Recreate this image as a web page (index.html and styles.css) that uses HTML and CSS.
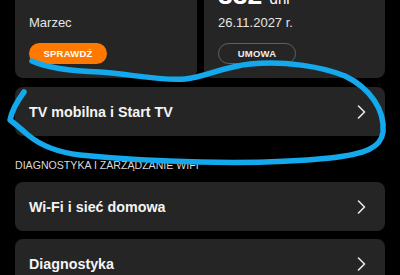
FILE: index.html
```html
<!DOCTYPE html>
<html lang="pl">
<head>
<meta charset="utf-8">
<link rel="stylesheet" href="styles.css">
</head>
<body>
<div class="page">
  <div class="summary">
    <div class="card tile">
      <div class="tile-text">Marzec</div>
      <button class="btn btn-orange">SPRAWDŹ</button>
    </div>
    <div class="card tile">
      <div class="big">332 <span class="unit">dni</span></div>
      <div class="tile-text">26.11.2027 r.</div>
      <button class="btn btn-outline">UMOWA</button>
    </div>
  </div>

  <a class="card row">
    <span class="row-title">TV mobilna i Start TV</span>
    <svg class="chev" width="9" height="14" viewBox="0 0 9 14"><path d="M1.5 1 L7.5 7 L1.5 13" fill="none" stroke="#e8e8e8" stroke-width="1.6" stroke-linecap="round" stroke-linejoin="round"/></svg>
  </a>

  <div class="section-label">DIAGNOSTYKA I ZARZĄDZANIE WIFI</div>

  <div class="list">
    <a class="card row">
      <span class="row-title">Wi-Fi i sieć domowa</span>
      <svg class="chev" width="9" height="14" viewBox="0 0 9 14"><path d="M1.5 1 L7.5 7 L1.5 13" fill="none" stroke="#e8e8e8" stroke-width="1.6" stroke-linecap="round" stroke-linejoin="round"/></svg>
    </a>
    <a class="card row">
      <span class="row-title">Diagnostyka</span>
      <svg class="chev" width="9" height="14" viewBox="0 0 9 14"><path d="M1.5 1 L7.5 7 L1.5 13" fill="none" stroke="#e8e8e8" stroke-width="1.6" stroke-linecap="round" stroke-linejoin="round"/></svg>
    </a>
  </div>
</div>

<svg class="scribble" width="400" height="275" viewBox="0 0 400 275">
  <path d="M32 61 C45 67 70 71 100 72 C130 74 160 81 185 79 C205 77 222 67 250 64 C285 61 320 66 345 76 C370 88 385 110 383 132 C381 148 365 154 330 158 C290 162 240 163 200 162 C150 161 110 158 80 155 C55 152 40 145 28 135 C20 128 14 123 10 120 C12 110 18 100 24 92" fill="none" stroke="#14a8ec" stroke-width="5.5" stroke-linecap="round" stroke-linejoin="round"/>
</svg>
</body>
</html>
```

FILE: styles.css
```css
html, body {
  margin: 0;
  padding: 0;
  background: #000;
  width: 400px;
  height: 275px;
  overflow: hidden;
}

body {
  position: relative;
  font-family: "Liberation Sans", Arial, sans-serif;
  color: #f2f2f2;
}

.page {
  padding: 0 15px;
  display: flex;
  flex-direction: column;
}

.card {
  background: #252525;
  border-radius: 8px;
}

.summary {
  display: grid;
  grid-template-columns: 182px 181px;
  gap: 7px;
  margin-top: -40px;
}

.tile {
  display: flex;
  flex-direction: column;
  justify-content: flex-end;
  align-items: flex-start;
  padding: 0 14px 14px;
  height: 118px;
  box-sizing: border-box;
}

.tile-text {
  font-size: 13px;
  line-height: 16px;
  color: #e6e6e6;
  margin-bottom: 12px;
}

.big {
  font-size: 26.5px;
  line-height: 28px;
  font-weight: 700;
  color: #fff;
  margin-bottom: 2px;
  white-space: nowrap;
}

.unit {
  font-size: 15px;
  font-weight: 400;
}

.btn {
  height: 21px;
  width: 78px;
  border-radius: 11px;
  font-family: "Liberation Sans", Arial, sans-serif;
  font-size: 9.5px;
  font-weight: 700;
  letter-spacing: 0.2px;
  padding: 0;
  display: flex;
  align-items: center;
  justify-content: center;
}

.btn-orange {
  background: #ff7900;
  border: none;
  color: #fff;
}

.btn-outline {
  background: transparent;
  border: 1px solid #616161;
  color: #ededed;
}

.row {
  display: flex;
  align-items: center;
  justify-content: space-between;
  height: 49px;
  padding: 0 19px 0 14px;
  box-sizing: border-box;
}

.summary + .row {
  margin-top: 9px;
}

.row-title {
  font-size: 14.3px;
  line-height: 20px;
  font-weight: 700;
  color: #f4f4f4;
}

.chev {
  display: block;
}

.section-label {
  font-size: 10.6px;
  line-height: 14px;
  color: #d9d9d9;
  margin: 22px 0 10px;
}

.list {
  display: flex;
  flex-direction: column;
  gap: 8px;
}

.scribble {
  position: absolute;
  left: 0;
  top: 0;
  pointer-events: none;
}
```
